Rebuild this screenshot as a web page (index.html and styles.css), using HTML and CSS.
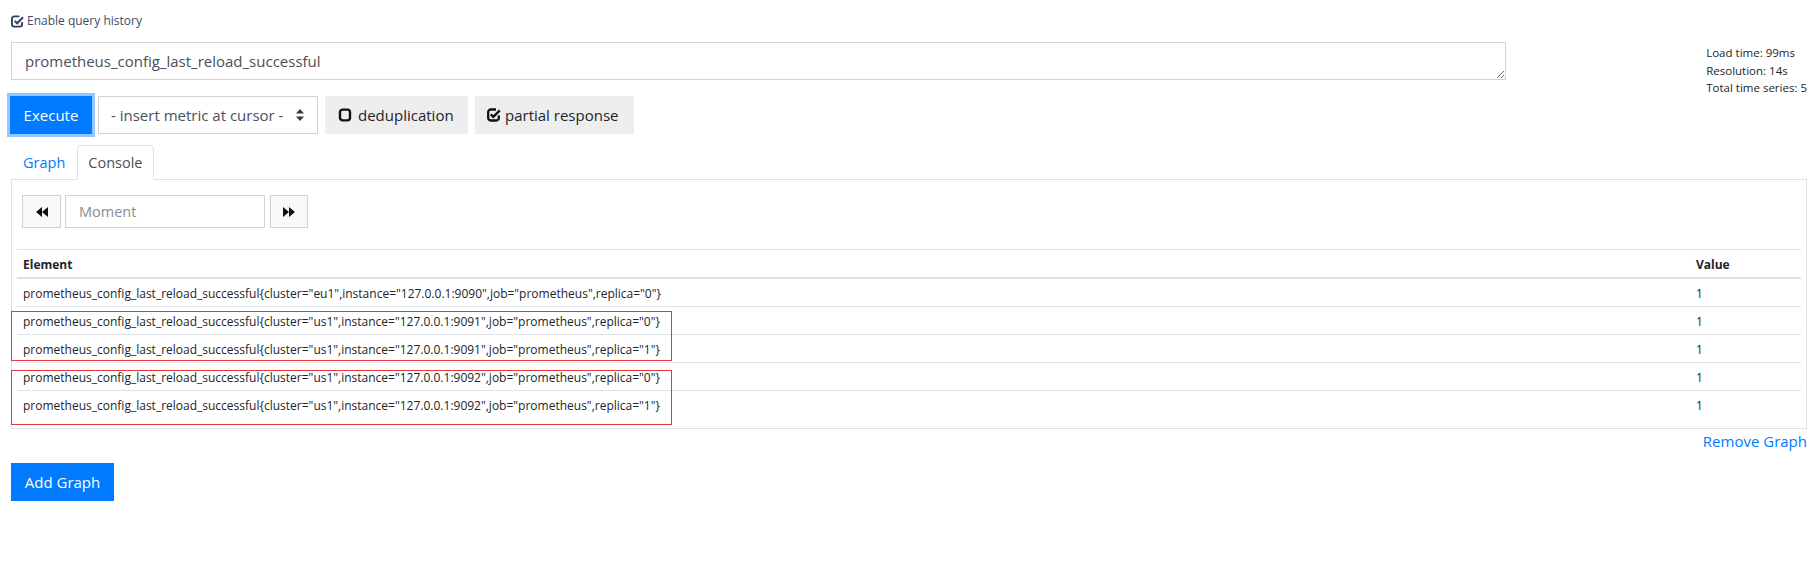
FILE: index.html
```html
<!DOCTYPE html>
<html>
<head>
<meta charset="utf-8">
<link rel="stylesheet" href="styles.css">
</head>
<body>
<div class="page">
  <label class="history">
    <svg class="ico-hist" viewBox="0 0 14 14"><path d="M12 7.5V10a2.5 2.5 0 0 1-2.5 2.5h-6A2.5 2.5 0 0 1 1 10V4a2.5 2.5 0 0 1 2.5-2.5H9" fill="none" stroke="currentColor" stroke-width="2"/><path d="M4 6.3l2.6 2.6L13 2.5" fill="none" stroke="currentColor" stroke-width="2.2"/></svg>
    <span>Enable query history</span>
  </label>

  <div class="query">
    <div class="query-main">
      <textarea class="expr">prometheus_config_last_reload_successful</textarea>
      <div class="controls">
        <button class="btn-primary execute">Execute</button>
        <div class="select">
          <span>- insert metric at cursor -</span>
          <svg class="sel-arrows" viewBox="0 0 8 12"><path d="M4 0L8 4.5H0z M4 12L0 7.5H8z" fill="#343a40"/></svg>
        </div>
        <button class="btn-light dedup">
          <svg class="ico" viewBox="0 0 14 14"><rect x="2" y="1.6" width="10" height="10.8" rx="2.6" fill="none" stroke="currentColor" stroke-width="2.4"/></svg>
          <span>deduplication</span>
        </button>
        <button class="btn-light partial">
          <svg class="ico" viewBox="0 0 14 14"><path d="M11.8 7.5V10a2.5 2.5 0 0 1-2.5 2.5h-5.6A2.5 2.5 0 0 1 1.2 10V4a2.5 2.5 0 0 1 2.5-2.5H9" fill="none" stroke="currentColor" stroke-width="2.3"/><path d="M3.8 6.3l2.5 2.5L12.8 2.3" fill="none" stroke="currentColor" stroke-width="2.4"/></svg>
          <span>partial response</span>
        </button>
      </div>
    </div>
    <div class="stats">
      <div>Load time: 99ms</div>
      <div>Resolution: 14s</div>
      <div>Total time series: 5</div>
    </div>
  </div>

  <div class="tabs">
    <a class="tab">Graph</a>
    <a class="tab active">Console</a>
  </div>

  <div class="panel">
    <div class="time-controls">
      <button class="tbtn back"><svg viewBox="0 0 12 10"><path d="M6 0L0 5L6 10Z M12 0L6 5L12 10Z" fill="#111"/></svg></button>
      <div class="moment">Moment</div>
      <button class="tbtn fwd"><svg viewBox="0 0 12 10"><path d="M0 0L6 5L0 10Z M6 0L12 5L6 10Z" fill="#111"/></svg></button>
    </div>

    <table class="results">
      <thead>
        <tr><th>Element</th><th class="val">Value</th></tr>
      </thead>
      <tbody>
        <tr><td>prometheus_config_last_reload_successful{cluster="eu1",instance="127.0.0.1:9090",job="prometheus",replica="0"}</td><td class="val">1</td></tr>
        <tr><td>prometheus_config_last_reload_successful{cluster="us1",instance="127.0.0.1:9091",job="prometheus",replica="0"}</td><td class="val">1</td></tr>
        <tr><td>prometheus_config_last_reload_successful{cluster="us1",instance="127.0.0.1:9091",job="prometheus",replica="1"}</td><td class="val">1</td></tr>
        <tr><td>prometheus_config_last_reload_successful{cluster="us1",instance="127.0.0.1:9092",job="prometheus",replica="0"}</td><td class="val">1</td></tr>
        <tr><td>prometheus_config_last_reload_successful{cluster="us1",instance="127.0.0.1:9092",job="prometheus",replica="1"}</td><td class="val">1</td></tr>
      </tbody>
    </table>

    <div class="mark mark-1"></div>
    <div class="mark mark-2"></div>
  </div>

  <div class="remove-row"><a class="remove">Remove Graph</a></div>
  <button class="btn-primary add">Add Graph</button>
</div>
</body>
</html>
```

FILE: styles.css
```css
* { box-sizing: border-box; }

body {
  margin: 0;
  background: #fff;
  color: #212529;
  font-family: "Open Sans", "Noto Sans", sans-serif;
}

.page {
  padding: 12px 11px 0 11px;
}

.history {
  display: flex;
  align-items: center;
  gap: 3px;
  font-size: 12px;
  line-height: 18px;
  color: #3d4b66;
}

.ico-hist {
  width: 13px;
  height: 13px;
  color: #2f3f66;
}

.query {
  display: flex;
  align-items: flex-start;
  margin-top: 12px;
}

.query-main {
  flex: 0 0 83.25%;
}

.expr {
  display: block;
  width: 100%;
  height: 38px;
  margin: 0;
  border: 1px solid #ced4da;
  border-radius: 0;
  padding: 6px 13px;
  font-family: "Open Sans", sans-serif;
  font-size: 15px;
  line-height: 24px;
  color: #495057;
  resize: vertical;
  overflow: hidden;
}

.stats {
  margin-left: auto;
  margin-top: 2px;
  font-size: 11.5px;
  line-height: 17.5px;
  color: #212529;
}

.controls {
  display: flex;
  align-items: center;
  margin-top: 16px;
  gap: 7px;
}

button {
  font-family: "Open Sans", sans-serif;
  cursor: pointer;
}

.btn-primary {
  background: #007bff;
  color: #fff;
  border: none;
  height: 38px;
  font-size: 15px;
  padding: 0;
}

.execute {
  width: 82px;
  box-shadow: 0 0 0 3px rgba(38, 143, 255, 0.5);
  margin-left: -1px;
  margin-right: -1px;
}

.select {
  width: 220px;
  height: 38px;
  border: 1px solid #ced4da;
  display: flex;
  align-items: center;
  justify-content: space-between;
  padding: 0 13px 0 12px;
  font-size: 15px;
  color: #495057;
  white-space: nowrap;
}

.sel-arrows {
  width: 8px;
  height: 12px;
}

.btn-light {
  height: 38px;
  background: #eeeeee;
  border: none;
  display: flex;
  align-items: center;
  gap: 6px;
  padding: 0 12px 0 13px;
  font-size: 15px;
  color: #212529;
  white-space: nowrap;
}

.dedup { width: 143px; }
.partial { width: 159px; gap: 4px; padding-left: 12px; }

.ico {
  flex: none;
  width: 14px;
  height: 14px;
  color: #111;
}

.tabs {
  display: flex;
  margin-top: 11px;
  border-bottom: 1px solid #dee2e6;
}

.tab {
  display: block;
  height: 35px;
  line-height: 33px;
  padding: 0 11px;
  font-size: 14.5px;
  color: #007bff;
  border: 1px solid transparent;
  border-top-left-radius: 4px;
  border-top-right-radius: 4px;
  margin-bottom: -1px;
}

.tab.active {
  color: #495057;
  background: #fff;
  border-color: #dee2e6 #dee2e6 #fff;
  padding: 0 11px 0 10px;
}

.panel {
  position: relative;
  border: 1px solid #dee2e6;
  border-top: none;
  padding: 15px 5px 10px;
}

.time-controls {
  display: flex;
  margin-left: 5px;
  height: 33px;
}

.tbtn {
  height: 33px;
  background: #f8f9fa;
  border: 1px solid #cfd2d5;
  padding: 0;
  display: flex;
  align-items: center;
  justify-content: center;
}

.tbtn svg {
  width: 12px;
  height: 10px;
}

.back { width: 39px; }
.fwd { width: 38px; margin-left: 5px; }

.moment {
  width: 200px;
  margin-left: 4px;
  height: 33px;
  border: 1px solid #ced4da;
  padding: 0 13px;
  line-height: 31px;
  font-size: 14.5px;
  color: #868e96;
}

.results {
  width: 100%;
  margin-top: 21px;
  border-collapse: separate;
  border-spacing: 0;
  font-size: 12px;
  line-height: 19px;
}

.results th {
  text-align: left;
  font-weight: 700;
  padding: 5px 6px 3px;
  border-top: 1px solid #dee2e6;
  border-bottom: 2px solid #dee2e6;
  color: #212529;
}

.results td {
  padding: 5px 6px 3px;
  border-top: 1px solid #dee2e6;
  color: #212529;
  white-space: nowrap;
}

.results tbody tr:first-child td {
  border-top: none;
}

.results .val {
  width: 111px;
}

.mark {
  position: absolute;
  left: -1px;
  width: 661px;
  border: 1px solid #e53935;
}

.mark-1 {
  top: 131px;
  height: 50px;
}

.mark-2 {
  top: 190px;
  height: 55px;
}

.remove-row {
  display: flex;
  justify-content: flex-end;
  margin-top: 2px;
}

.remove {
  font-size: 15px;
  line-height: 20px;
  color: #007bff;
}

.add {
  display: block;
  margin-top: 12px;
  width: 103px;
}
```
